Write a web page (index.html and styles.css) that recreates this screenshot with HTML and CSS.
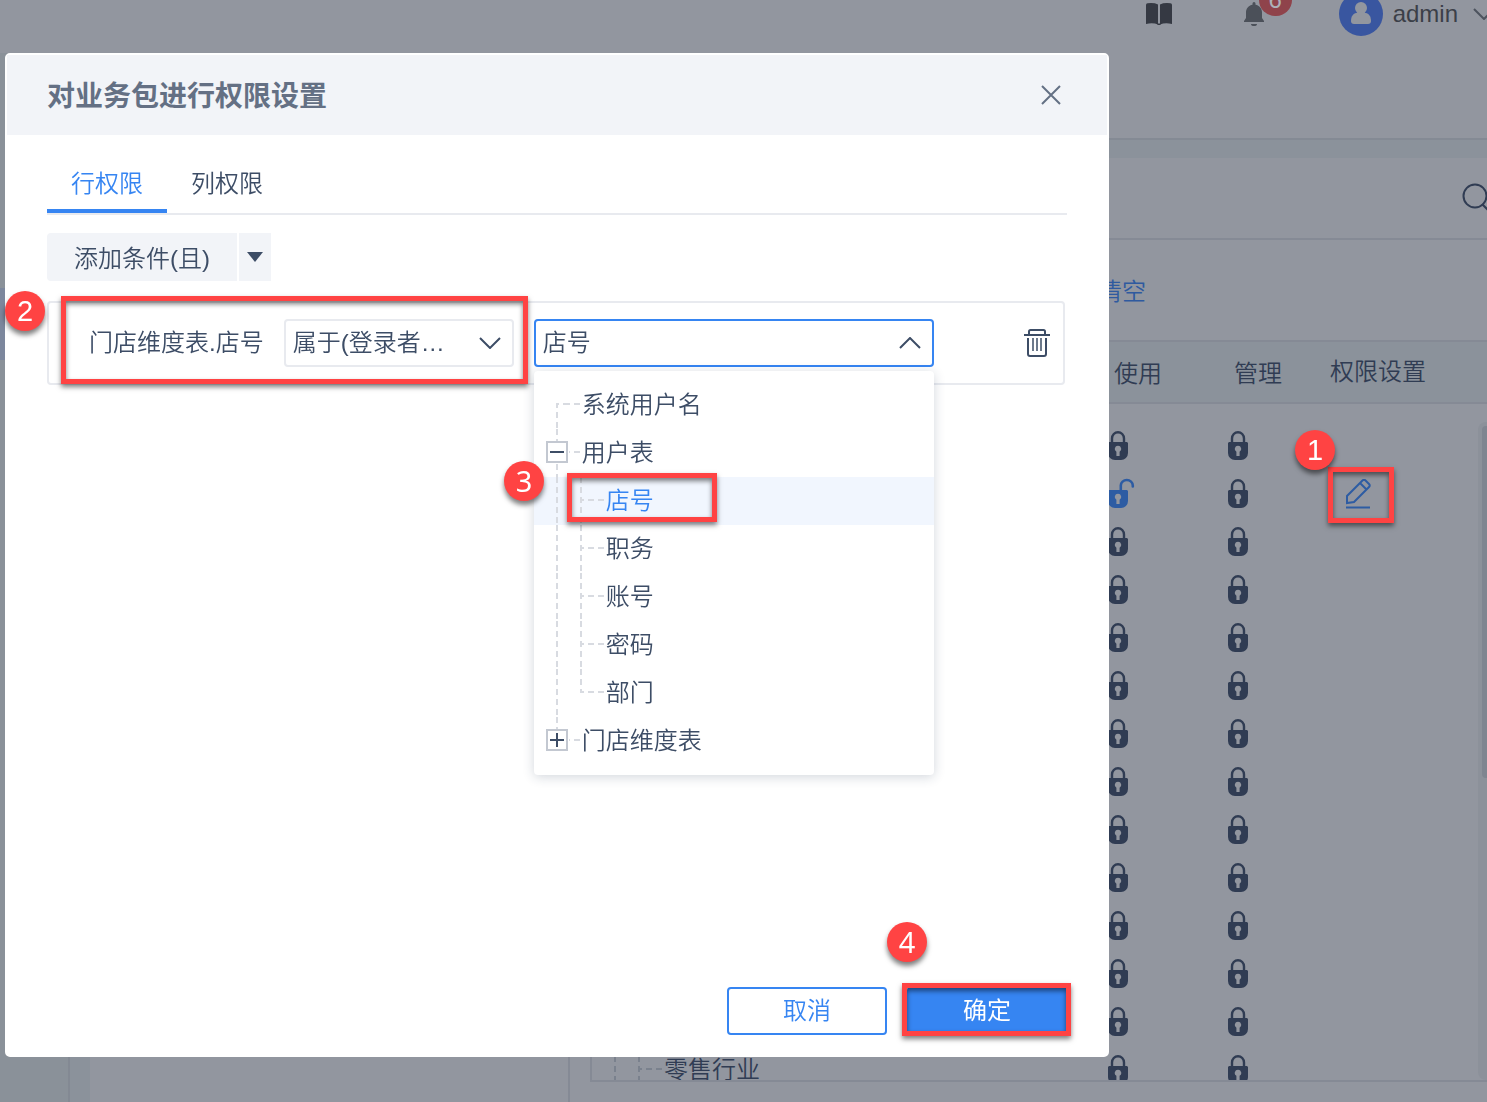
FILE: index.html
```html
<!DOCTYPE html>
<html lang="zh-CN">
<head>
<meta charset="utf-8">
<meta name="viewport" content="width=device-width, initial-scale=1">
<title>对业务包进行权限设置</title>
<link rel="stylesheet" href="styles.css">
</head>
<body>
<svg class="sprite" aria-hidden="true">
  <symbol id="lock" viewBox="0 0 28 30">
    <path d="M8 12V7.500a6 6.300 0 0 1 12 0V12" fill="none" stroke="currentColor" stroke-width="2.400"/>
    <path fill-rule="evenodd" fill="currentColor" d="M5 11h18l1 1v10a7 7 0 0 1-7 7h-6a7 7 0 0 1-7-7V12zM14 14.800a3.200 3.200 0 0 0-1.600 6V25h3.200v-4.200a3.200 3.200 0 0 0-1.600-6z"/>
  </symbol>
  <symbol id="unlock" viewBox="0 0 28 30">
    <path d="M16.800 12V6.500a6 5.500 0 0 1 12 0v1" fill="none" stroke="currentColor" stroke-width="2.600" stroke-linecap="round"/>
    <path fill-rule="evenodd" fill="currentColor" d="M5 11h18l1 1v10a7 7 0 0 1-7 7h-6a7 7 0 0 1-7-7V12zM14 14.800a3.200 3.200 0 0 0-1.600 6V25h3.200v-4.200a3.200 3.200 0 0 0-1.600-6z"/>
  </symbol>
  <symbol id="rail-start" viewBox="0 0 24 48"><path d="M24 23H12V48"/></symbol>
  <symbol id="rail-mid" viewBox="0 0 24 48"><path d="M12 0V48M12 23H15M19 23H24"/></symbol>
  <symbol id="rail-end" viewBox="0 0 24 48"><path d="M12 0V24M12 23H15M19 23H24"/></symbol>
  <symbol id="rail-line" viewBox="0 0 24 48"><path d="M12 0V48"/></symbol>
  <symbol id="rail-stub" viewBox="0 0 13 48"><path d="M0 23H1M5 23H11"/></symbol>
  <symbol id="rail-minus" viewBox="0 0 24 48"><path d="M12 0V12M12 35V48"/></symbol>
  <symbol id="rail-plus" viewBox="0 0 24 48"><path d="M12 0V12"/></symbol>
</svg>

<div class="app">
  <header class="topbar">
    <div class="topbar-actions">
      <svg class="book" viewBox="0 0 26 22"><path fill="currentColor" d="M0 2Q0 .5 1.500.300Q8-.500 12 1.500V21.500Q7 19.500 0 21zM26 2Q26 .500 24.500.300Q18-.500 14 1.500V21.500Q19 19.500 26 21z"/><path d="M11.500 20.500h3v1.500h-3z" fill="currentColor"/></svg>
      <div class="bell-wrap">
        <svg class="bell" viewBox="0 0 20 24"><path fill="currentColor" d="M10 0a1.500 1.500 0 0 1 1.500 1.500v1.200C15.500 3.400 18 6.500 18 10.500V16l2 3v1H0v-1l2-3v-5.500C2 6.500 4.500 3.400 8.500 2.700V1.500A1.500 1.500 0 0 1 10 0zM7 22h6a3 2 0 0 1-6 0z"/></svg>
        <span class="count">6</span>
      </div>
      <svg class="avatar" viewBox="0 0 44 44"><circle cx="22" cy="22" r="22" fill="#3956a0"/><circle cx="22" cy="16" r="6" fill="#92969f"/><path fill="#92969f" d="M17 21h10c4 1 5 5 5 8q0 3-3 3H15q-3 0-3-3c0-3 1-7 5-8z"/></svg>
      <span class="user">admin</span>
      <svg class="chev" viewBox="0 0 22 12"><path d="M1 1l10 10L21 1" fill="none" stroke="#4d535e" stroke-width="2"/></svg>
    </div>
  </header>

  <div class="shell">
    <nav class="sidebar"><div class="sidebar-active"></div></nav>
    <main class="main">
      <div class="subheader"></div>
      <div class="workspace">
        <section class="list-pane"></section>
        <section class="detail-pane">
          <div class="search-bar">
            <svg class="search" viewBox="0 0 32 32"><circle cx="13" cy="14" r="11.500"/><path d="M20 22l8 8"/></svg>
          </div>
          <div class="tools"><a href="#clear">清空</a></div>
          <div class="grid">
            <table>
              <colgroup><col class="c-name"><col class="c-lock"><col class="c-lock"><col></colgroup>
              <thead><tr><th></th><th class="wide">使用</th><th class="wide">管理</th><th class="set">权限设置</th></tr></thead>
              <tbody>
                <tr class="spacer"><td colspan="4"></td></tr>
                <tr><td></td><td><svg><use href="#lock"/></svg></td><td><svg><use href="#lock"/></svg></td><td></td></tr>
                <tr><td></td><td><svg class="open"><use href="#unlock"/></svg></td><td><svg><use href="#lock"/></svg></td><td><button class="edit" aria-label="权限设置"><svg viewBox="0 0 28 30"><path d="M2 28.500H26" /><path d="M3 24v-7L18.500 1.500Q20 0 21.500 1.500L25 5q1.500 1.500 0 3L10 23zM16 4l6.500 6.500"/></svg></button></td></tr>
                <tr><td></td><td><svg><use href="#lock"/></svg></td><td><svg><use href="#lock"/></svg></td><td></td></tr>
                <tr><td></td><td><svg><use href="#lock"/></svg></td><td><svg><use href="#lock"/></svg></td><td></td></tr>
                <tr><td></td><td><svg><use href="#lock"/></svg></td><td><svg><use href="#lock"/></svg></td><td></td></tr>
                <tr><td></td><td><svg><use href="#lock"/></svg></td><td><svg><use href="#lock"/></svg></td><td></td></tr>
                <tr><td></td><td><svg><use href="#lock"/></svg></td><td><svg><use href="#lock"/></svg></td><td></td></tr>
                <tr><td></td><td><svg><use href="#lock"/></svg></td><td><svg><use href="#lock"/></svg></td><td></td></tr>
                <tr><td></td><td><svg><use href="#lock"/></svg></td><td><svg><use href="#lock"/></svg></td><td></td></tr>
                <tr><td></td><td><svg><use href="#lock"/></svg></td><td><svg><use href="#lock"/></svg></td><td></td></tr>
                <tr><td></td><td><svg><use href="#lock"/></svg></td><td><svg><use href="#lock"/></svg></td><td></td></tr>
                <tr><td></td><td><svg><use href="#lock"/></svg></td><td><svg><use href="#lock"/></svg></td><td></td></tr>
                <tr><td></td><td><svg><use href="#lock"/></svg></td><td><svg><use href="#lock"/></svg></td><td></td></tr>
                <tr><td><div class="node"><svg class="rail"><use href="#rail-line"/></svg><svg class="rail"><use href="#rail-mid"/></svg><svg class="stub"><use href="#rail-stub"/></svg>零售行业</div></td><td><svg><use href="#lock"/></svg></td><td><svg><use href="#lock"/></svg></td><td></td></tr>
              </tbody>
            </table>
            <div class="track"><div class="thumb"></div></div>
          </div>
        </section>
      </div>
    </main>
  </div>
</div>

<div class="overlay">
  <div class="dialog" role="dialog" aria-labelledby="dialog-title">
    <div class="dialog-head">
      <h1 id="dialog-title">对业务包进行权限设置</h1>
      <button class="close" aria-label="关闭"><svg viewBox="0 0 20 20"><path d="M1 1l18 18M19 1L1 19"/></svg></button>
    </div>
    <div class="dialog-body">
      <div class="tabs" role="tablist">
        <button class="tab active" role="tab" aria-selected="true">行权限</button>
        <button class="tab" role="tab" aria-selected="false">列权限</button>
      </div>
      <div class="add">
        <button class="add-main">添加条件(且)</button>
        <button class="add-more" aria-label="更多条件"><svg viewBox="0 0 16 12"><path d="M0 1h16L8 11z" fill="currentColor"/></svg></button>
      </div>
      <div class="condition">
        <label for="operator">门店维度表.店号</label>
        <div class="field operator">
          <select id="operator"><option>属于(登录者…</option></select>
          <svg viewBox="0 0 22 12"><path d="M1 1l10 10L21 1"/></svg>
        </div>
        <div class="field value">
          <select aria-label="登录者字段"><option>店号</option></select>
          <svg viewBox="0 0 22 12"><path d="M1 11L11 1l10 10"/></svg>
          <div class="menu" role="tree">
            <div class="row" role="treeitem"><svg class="rail"><use href="#rail-start"/></svg><svg class="stub"><use href="#rail-stub"/></svg>系统用户名</div>
            <div class="row" role="treeitem"><span class="toggle-cell"><svg class="rail"><use href="#rail-minus"/></svg><button class="toggle" aria-label="收起"><svg viewBox="0 0 18 18"><path d="M2 9h14"/></svg></button></span><svg class="stub"><use href="#rail-stub"/></svg>用户表</div>
            <div class="row chosen" role="treeitem"><svg class="rail"><use href="#rail-line"/></svg><svg class="rail"><use href="#rail-mid"/></svg><svg class="stub"><use href="#rail-stub"/></svg>店号</div>
            <div class="row" role="treeitem"><svg class="rail"><use href="#rail-line"/></svg><svg class="rail"><use href="#rail-mid"/></svg><svg class="stub"><use href="#rail-stub"/></svg>职务</div>
            <div class="row" role="treeitem"><svg class="rail"><use href="#rail-line"/></svg><svg class="rail"><use href="#rail-mid"/></svg><svg class="stub"><use href="#rail-stub"/></svg>账号</div>
            <div class="row" role="treeitem"><svg class="rail"><use href="#rail-line"/></svg><svg class="rail"><use href="#rail-mid"/></svg><svg class="stub"><use href="#rail-stub"/></svg>密码</div>
            <div class="row" role="treeitem"><svg class="rail"><use href="#rail-line"/></svg><svg class="rail"><use href="#rail-end"/></svg><svg class="stub"><use href="#rail-stub"/></svg>部门</div>
            <div class="row" role="treeitem"><span class="toggle-cell"><svg class="rail"><use href="#rail-plus"/></svg><button class="toggle" aria-label="展开"><svg viewBox="0 0 18 18"><path d="M2 9h14M9 2v14"/></svg></button></span><svg class="stub"><use href="#rail-stub"/></svg>门店维度表</div>
          </div>
        </div>
        <button class="trash" aria-label="删除"><svg viewBox="0 0 26 28"><path d="M0 6h26M5 6V2.500Q5 1 6.500 1h13Q21 1 21 2.500V6M4 9v16q0 2 2 2h14q2 0 2-2V9"/><path stroke-width="1.500" d="M9 9v13M13 9v13M17 9v13"/></svg></button>
      </div>
    </div>
    <div class="dialog-foot">
      <button class="btn">取消</button>
      <button class="btn primary">确定</button>
    </div>
  </div>
</div>

<div class="frame frame-1"></div><div class="step step-1">1</div>
<div class="frame frame-2"></div><div class="step step-2">2</div>
<div class="frame frame-3"></div><div class="step step-3">3</div>
<div class="frame frame-4"></div><div class="step step-4">4</div>
</body>
</html>
```
FILE: styles.css
```css
* { box-sizing: border-box; }
html, body { height: 100%; margin: 0; }
body {
  overflow: hidden;
  font: 24px/36px "Liberation Sans", "Noto Sans CJK SC", sans-serif;
  font-weight: 350;
  color: #3d4d66;
}
button, select { font: inherit; color: inherit; border: 0; padding: 0; margin: 0; background: none; }
svg { display: block; flex: none; }
.sprite { position: absolute; width: 0; height: 0; }

/* page behind the dialog */
.app { display: flex; flex-direction: column; height: 100vh; overflow: hidden; background: #92969f; color: #303c53; }
.topbar { flex: none; height: 53px; overflow: hidden; }
.topbar-actions { display: flex; align-items: center; justify-content: flex-end; height: 44px; margin: -8px -8px 0 0; }
.book { width: 26px; height: 22px; margin-right: 72px; color: #353943; }
.bell-wrap { position: relative; margin-right: 75px; color: #4b5059; }
.bell { width: 20px; height: 24px; }
.count { position: absolute; left: 15px; top: -18px; width: 33px; height: 32px; border-radius: 16px; background: #8f434b; color: #adb1b8; font-size: 24px; line-height: 32px; text-align: center; }
.avatar { width: 44px; height: 44px; margin-right: 10px; }
.user { color: #3b3f48; margin-right: 15px; }
.chev { width: 22px; height: 12px; }
.shell { flex: 1; display: flex; min-height: 0; }
.sidebar { width: 70px; flex: none; padding-top: 235px; background: #8a9199; border-right: 2px solid #838993; }
.sidebar-active { height: 72px; background: #7c879d; }
.main { flex: 1; min-width: 0; display: flex; flex-direction: column; background: #8b929b; }
.subheader { flex: none; height: 87px; background: #92969f; border-bottom: 2px solid #848a94; }
.workspace { flex: 1; min-height: 0; display: flex; margin: 18px 0 0 20px; background: #92969f; }
.list-pane { width: 480px; flex: none; border-right: 2px solid #858a95; }
.detail-pane { flex: 1; min-width: 0; display: flex; flex-direction: column; }
.search-bar { flex: none; height: 82px; display: flex; align-items: center; justify-content: flex-end; border-bottom: 2px solid #858a95; overflow: hidden; }
.search { width: 32px; height: 32px; margin-right: -7px; fill: none; stroke: #303c53; stroke-width: 2; }
.tools { flex: none; height: 100px; display: flex; align-items: center; padding: 4px 0 0 528px; }
.tools a { color: #2f5a9f; text-decoration: none; }
.grid { position: relative; flex: 1; min-height: 0; display: flex; margin: 0 0 20px 20px; border: 2px solid #858a95; border-right: 0; overflow: hidden; }
table { flex: 1; min-width: 0; height: 0; table-layout: fixed; border-collapse: separate; border-spacing: 0; }
.c-name { width: 466px; }
.c-lock { width: 120px; }
th { height: 62px; padding: 4px 0 0; font-weight: inherit; text-align: left; background: #8b929b; border-bottom: 2px solid #858a95; }
th.wide { padding-left: 56px; }
th.set { padding: 0 0 0 32px; }
td { height: 48px; padding: 0; }
.spacer td { height: 18px; }
td > svg { width: 28px; height: 30px; margin: 0 auto; overflow: visible; }
td > svg.open { color: #2d5ca3; }
.open use { overflow: visible; }
#unlock { overflow: visible; }
.edit { display: block; margin-left: 46px; }
.edit svg { width: 28px; height: 30px; fill: none; stroke: #2d5ca3; stroke-width: 2; }
.node { display: flex; align-items: center; height: 48px; padding-left: 11px; }
.node .rail, .node .stub { stroke: #7a818d; }
.track { position: absolute; top: 80px; right: 0; bottom: 0; width: 9px; padding: 4px 0 0 4px; border-radius: 8px 0 0 8px; background: #8c919a; }
.thumb { height: 352px; border-radius: 4px 0 0 4px; background: #7f8590; }

/* tree guide lines */
.rail, .stub { height: 48px; fill: none; stroke: #d8dbe1; stroke-width: 2; }
.rail { width: 24px; stroke-dasharray: 6 4; }
.stub { width: 13px; }

/* dialog */
.overlay { position: fixed; inset: 0; display: flex; padding: 53px 378px 45px 5px; }
.dialog { flex: 1; min-width: 0; display: flex; flex-direction: column; border: 2px solid #fff; border-radius: 5px; background: #fff; }
.dialog-head { display: flex; align-items: center; justify-content: space-between; height: 80px; padding: 0 46px 0 40px; background: #f2f4f8; }
h1 { margin: 0; padding-top: 4px; font-size: 28px; line-height: 40px; font-weight: 700; color: #647084; }
.close svg { width: 20px; height: 20px; fill: none; stroke: #647084; stroke-width: 2; }
.dialog-body { flex: 1; padding: 20px 40px 0; }
.tabs { display: flex; border-bottom: 2px solid #e8eaef; }
.tab { width: 120px; height: 58px; padding-top: 4px; border-bottom: 4px solid transparent; }
.tab.active { color: #3685f2; border-color: #3685f2; }
.add { display: flex; gap: 2px; margin-top: 18px; }
.add button { height: 48px; background: #f2f4f8; }
.add .add-main { width: 190px; padding-top: 4px; border-radius: 4px 0 0 4px; }
.add-more { width: 32px; display: flex; align-items: center; justify-content: center; }
.add-more svg { width: 16px; height: 12px; }
.condition { display: flex; align-items: center; gap: 20px; height: 84px; margin: 20px 2px 0 0; padding: 0 13px 0 40px; border: 2px solid #e8eaef; border-radius: 4px; }
.condition label { white-space: nowrap; }
.field { position: relative; height: 48px; }
.operator { width: 230px; }
.value { width: 400px; }
.field select { width: 100%; height: 48px; padding: 0 60px 0 7px; border: 2px solid #e8eaef; border-radius: 4px; appearance: none; background: #fff; }
.value select { border-color: #3685f2; }
.field > svg { position: absolute; right: 13px; top: 18px; width: 22px; height: 12px; fill: none; stroke: #3d4d66; stroke-width: 2; pointer-events: none; }
.trash { margin-left: auto; }
.trash svg { width: 26px; height: 28px; fill: none; stroke: #3d4d66; stroke-width: 2; }
.menu { position: absolute; left: 0; top: 52px; width: 100%; padding: 10px 0; border-radius: 4px; background: #fff; box-shadow: 0 2px 12px rgba(30, 50, 80, .2); }
.row { display: flex; align-items: center; height: 48px; padding-left: 11px; }
.row.chosen { background: #f1f6fe; color: #3685f2; }
.toggle-cell { position: relative; width: 24px; height: 48px; }
.toggle { position: absolute; left: 1px; top: 12px; width: 22px; height: 22px; border: 2px solid #c3c8d1; background: #fff; }
.toggle svg { width: 18px; height: 18px; fill: none; stroke: #3d4d66; stroke-width: 2; }
.dialog-foot { display: flex; justify-content: flex-end; gap: 20px; padding: 0 40px 20px; }
.btn { width: 160px; height: 48px; border: 2px solid #3685f2; border-radius: 4px; color: #3685f2; }
.btn.primary { background: #3685f2; color: #fff; font-weight: 400; }

/* walkthrough marks */
.frame { position: absolute; border: 5px solid #ff4343; box-shadow: 0 3px 5px rgba(0, 0, 0, .5), inset 0 3px 5px rgba(0, 0, 0, .5); pointer-events: none; }
.step { position: absolute; width: 40px; height: 40px; border-radius: 20px; background: #ff4343; color: #fff; font: 29px/40px "Noto Sans", sans-serif; text-align: center; box-shadow: 0 4px 5px rgba(0, 0, 0, .5); }
.frame-1 { left: 1328px; top: 467px; width: 66px; height: 56px; }
.frame-2 { left: 61px; top: 296px; width: 467px; height: 88px; }
.frame-3 { left: 567px; top: 473px; width: 150px; height: 49px; }
.frame-4 { left: 902px; top: 983px; width: 169px; height: 53px; }
.step-1 { left: 1295px; top: 430px; font-family: "Liberation Sans", sans-serif; }
.step-2 { left: 5px; top: 291px; font-family: "Liberation Sans", sans-serif; }
.step-3 { left: 504px; top: 461px; }
.step-4 { left: 887px; top: 922px; }
```
